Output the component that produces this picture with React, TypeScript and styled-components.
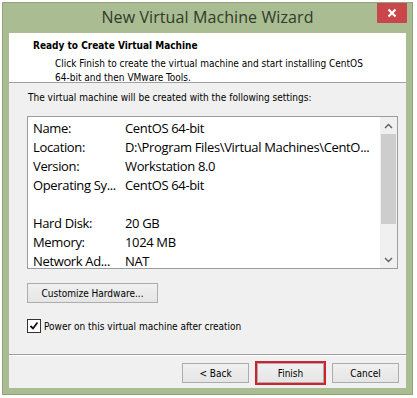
import styled, { createGlobalStyle } from "styled-components";

const Global = createGlobalStyle`
  html, body { margin: 0; padding: 0; background: #ffffff; }
  body { font-family: "Liberation Sans", Arial, sans-serif; }
`;

const uiFont = `"DejaVu Sans Condensed", "DejaVu Sans", Tahoma, sans-serif`;

// Frame
const Window = styled.div`
  position: relative;
  margin: 2px 0 0 2px;
  width: 411px;
  height: 393px;
  box-sizing: border-box;
  background: #aabd92;
  border: 1px solid #8fa37a;
  display: flex;
  flex-direction: column;
`;

const TitleBar = styled.div`
  height: 30px;
  padding-bottom: 3px;
  box-sizing: border-box;
  display: flex;
  align-items: center;
  justify-content: center;
  font-family: "Open Sans", "Noto Sans", sans-serif;
  font-size: 16px;
  color: #2e3a2a;
  letter-spacing: 0.1px;
`;

const CloseButton = styled.div`
  position: absolute;
  top: 0;
  right: 5px;
  width: 30px;
  height: 20px;
  background: #c9474b;
  display: flex;
  align-items: center;
  justify-content: center;
`;

const Client = styled.div`
  margin: 0 6px 0 6px;
  background: #f0f0f0;
  display: flex;
  flex-direction: column;
  height: 355px;
  font-family: ${uiFont};
  font-size: 10px;
  color: #000;
`;

// Header
const Header = styled.div`
  background: #ffffff;
  height: 50px;
  border-bottom: 1px solid #a0a0a0;
  box-sizing: border-box;
  padding: 6px 0 0 24px;
`;

const HeaderTitle = styled.div`
  font-weight: bold;
  font-size: 10px;
  line-height: 14px;
`;

const HeaderText = styled.div`
  margin-top: 4px;
  padding-left: 22px;
  line-height: 14px;
`;

// Main
const Main = styled.div`
  flex: 1;
  padding: 8px 8px 0 18px;
  border-bottom: 1px solid #a0a0a0;
  box-shadow: 0 1px 0 #ffffff;
`;

const Intro = styled.div`
  line-height: 14px;
  margin-left: 1px;
`;

const ListBox = styled.div`
  margin-top: 11px;
  width: 371px;
  height: 153px;
  box-sizing: border-box;
  border: 1px solid #9c9c9c;
  background: #ffffff;
  display: flex;
  overflow: hidden;
`;

const Rows = styled.div`
  flex: 1;
  padding: 2px 0 0 5px;
  font-family: "Open Sans", "Noto Sans", sans-serif;
  font-size: 13px;
  letter-spacing: -0.35px;
`;

const Row = styled.div`
  display: flex;
  height: 19px;
  line-height: 19px;
  white-space: nowrap;
`;

const Label = styled.span`
  width: 92px;
  overflow: hidden;
`;

const Value = styled.span``;

const ScrollBar = styled.div`
  width: 17px;
  background: #f0f0f0;
  display: flex;
  flex-direction: column;
  align-items: center;
`;

const Arrow = styled.div`
  height: 17px;
  display: flex;
  align-items: center;
  justify-content: center;
`;

const Thumb = styled.div`
  width: 15px;
  height: 90px;
  background: #cdcdcd;
`;

const Track = styled.div`
  flex: 1;
`;

const Button = styled.button<{ $width?: number; $focus?: boolean }>`
  width: ${(p) => p.$width ?? 67}px;
  height: 20px;
  box-sizing: border-box;
  border: 1px solid #acacac;
  background: linear-gradient(#f0f0f0, #e5e5e5);
  font-family: ${uiFont};
  font-size: 10px;
  color: #000;
  padding: 0;
  ${(p) => p.$focus && `outline: 2px solid #d2202e; outline-offset: 0px;`}
`;

const CustomizeRow = styled.div`
  margin-top: 14px;
`;

const CheckRow = styled.label`
  margin-top: 16px;
  display: flex;
  align-items: center;
  gap: 3px;
`;

const Box = styled.span`
  width: 12px;
  height: 12px;
  border: 1px solid #333;
  background: #fff;
  display: flex;
  align-items: center;
  justify-content: center;
`;

// Footer
const Footer = styled.div`
  height: 33px;
  display: flex;
  justify-content: flex-end;
  align-items: center;
  gap: 8px;
  padding-right: 7px;
  padding-top: 3px;
  box-sizing: border-box;
`;

const rows: [string, string][] = [
  ["Name:", "CentOS 64-bit"],
  ["Location:", "D:\\Program Files\\Virtual Machines\\CentO..."],
  ["Version:", "Workstation 8.0"],
  ["Operating Sy...", "CentOS 64-bit"],
  ["", ""],
  ["Hard Disk:", "20 GB"],
  ["Memory:", "1024 MB"],
  ["Network Ad...", "NAT"],
];

export default function App() {
  return (
    <>
      <Global />
      <Window>
        <TitleBar>New Virtual Machine Wizard</TitleBar>
        <CloseButton>
          <svg width="10" height="10" viewBox="0 0 10 10">
            <path d="M1.5 1.5 L8.5 8.5 M8.5 1.5 L1.5 8.5" stroke="#fff" strokeWidth="2.2" />
          </svg>
        </CloseButton>
        <Client>
          <Header>
            <HeaderTitle>Ready to Create Virtual Machine</HeaderTitle>
            <HeaderText>
              Click Finish to create the virtual machine and start installing CentOS
              <br />
              64-bit and then VMware Tools.
            </HeaderText>
          </Header>
          <Main>
            <Intro>The virtual machine will be created with the following settings:</Intro>
            <ListBox>
              <Rows>
                {rows.map(([l, v], i) => (
                  <Row key={i}>
                    <Label>{l}</Label>
                    <Value>{v}</Value>
                  </Row>
                ))}
              </Rows>
              <ScrollBar>
                <Arrow>
                  <svg width="9" height="6" viewBox="0 0 9 6">
                    <path d="M1 5 L4.5 1.5 L8 5" fill="none" stroke="#606060" strokeWidth="1.4" />
                  </svg>
                </Arrow>
                <Thumb />
                <Track />
                <Arrow>
                  <svg width="9" height="6" viewBox="0 0 9 6">
                    <path d="M1 1 L4.5 4.5 L8 1" fill="none" stroke="#606060" strokeWidth="1.4" />
                  </svg>
                </Arrow>
              </ScrollBar>
            </ListBox>
            <CustomizeRow>
              <Button $width={131}>Customize Hardware...</Button>
            </CustomizeRow>
            <CheckRow>
              <Box>
                <svg width="10" height="10" viewBox="0 0 10 10">
                  <path d="M1.5 5 L4 7.5 L8.5 1.5" fill="none" stroke="#111" strokeWidth="1.8" />
                </svg>
              </Box>
              Power on this virtual machine after creation
            </CheckRow>
          </Main>
          <Footer>
            <Button>&lt; Back</Button>
            <Button $focus>Finish</Button>
            <Button>Cancel</Button>
          </Footer>
        </Client>
      </Window>
    </>
  );
}
